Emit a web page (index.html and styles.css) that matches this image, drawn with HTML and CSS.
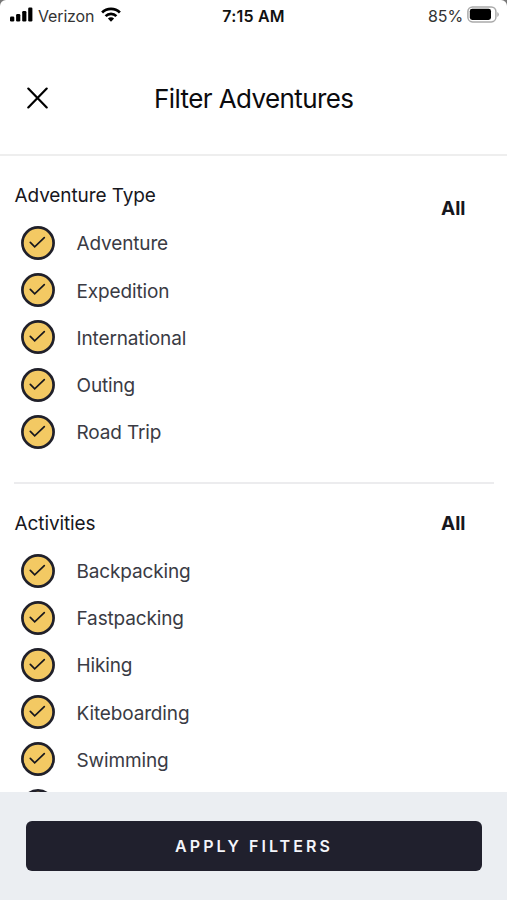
FILE: index.html
```html
<!DOCTYPE html>
<html lang="en">
<head>
<meta charset="utf-8">
<title>Filter Adventures</title>
<link rel="stylesheet" href="styles.css">
</head>
<body>
<svg width="0" height="0" class="defs" aria-hidden="true">
  <symbol id="check" viewBox="0 0 34 34">
    <circle cx="17" cy="17" r="15.6" fill="#f3c963" stroke="#20202a" stroke-width="2.7"/>
    <path d="M9.3 16.3l4.4 4.5 9.6-9.1" fill="none" stroke="#17171d" stroke-width="1.7" stroke-linecap="round"/>
  </symbol>
</svg>
<div class="screen">
  <div class="status">
    <div class="carrier">
      <svg class="signal" width="23" height="15" viewBox="0 0 23 15"><rect x="0" y="9.5" width="4.3" height="5" rx="1.3"/><rect x="6.1" y="7" width="4.2" height="7.5" rx="1.2"/><rect x="12.2" y="4" width="4.2" height="10.5" rx="1.2"/><rect x="18.2" y="0.5" width="4.2" height="14" rx="1.2"/></svg>
      <span class="network">Verizon</span>
      <svg width="20" height="15" viewBox="0 0 20 15" fill="none" stroke="#000" stroke-width="2.7"><path d="M1.1 5.5a12.6 12.6 0 0 1 17.8 0"/><path d="M4.6 9.1a7.6 7.6 0 0 1 10.8 0"/><path d="M10 14.7l-3.1-3.1a4.4 4.4 0 0 1 6.2 0z" fill="#000" stroke="none"/></svg>
    </div>
    <span class="clock">7:15 AM</span>
    <div class="power">
      <span class="percent">85%</span>
      <svg width="32" height="17" viewBox="0 0 32 17"><rect x=".9" y=".9" width="28" height="15" rx="4.6" fill="#fff" stroke="#aaa" stroke-width="1.5"/><rect x="2.8" y="2.8" width="21.2" height="11.2" rx="2.4"/><path d="M30.3 6v5q1.5-.8 1.5-2.5t-1.5-2.5z" fill="#aaa"/></svg>
    </div>
  </div>
  <header class="header">
    <svg class="close" width="22" height="22" viewBox="0 0 22 22"><path d="M1.3 1.6l18.4 18.8M19.7 1.6L1.3 20.4" stroke="#000" stroke-width="2.2" stroke-linecap="round"/></svg>
    <h1>Filter Adventures</h1>
  </header>
  <main class="filters">
    <section class="group">
      <div class="group-head first"><h2>Adventure Type</h2><span class="all">All</span></div>
      <ul>
        <li><svg><use href="#check"/></svg><span>Adventure</span></li>
        <li><svg><use href="#check"/></svg><span>Expedition</span></li>
        <li><svg><use href="#check"/></svg><span>International</span></li>
        <li><svg><use href="#check"/></svg><span>Outing</span></li>
        <li><svg><use href="#check"/></svg><span>Road Trip</span></li>
      </ul>
    </section>
    <section class="group">
      <div class="group-head"><h2>Activities</h2><span class="all">All</span></div>
      <ul>
        <li><svg><use href="#check"/></svg><span>Backpacking</span></li>
        <li><svg><use href="#check"/></svg><span>Fastpacking</span></li>
        <li><svg><use href="#check"/></svg><span>Hiking</span></li>
        <li><svg><use href="#check"/></svg><span>Kiteboarding</span></li>
        <li><svg><use href="#check"/></svg><span>Swimming</span></li>
        <li><svg><use href="#check"/></svg></li>
      </ul>
    </section>
  </main>
  <footer class="footer"><button>APPLY FILTERS</button></footer>
</div>
</body>
</html>
```
FILE: styles.css
```css
* { box-sizing: border-box; margin: 0; padding: 0; }
body { font-family: Inter, "Liberation Sans", sans-serif; background: #777; color: #17171d; }
.defs { position: absolute; }
.screen { height: 900px; display: flex; flex-direction: column; overflow: hidden; background: #fff; border-radius: 6px 6px 0 0; }
svg { display: block; flex: none; }

.status { height: 30px; display: grid; grid-template-columns: 1fr auto 1fr; align-items: center; padding: 0 8px 4px 10px; line-height: 26px; }
.carrier { display: flex; align-items: center; padding-bottom: 3px; }
.network { font-size: 16px; letter-spacing: -0.15px; color: #333; margin: 3px 7px 0 5px; }
.clock { font-size: 16px; font-weight: 600; letter-spacing: 0.2px; color: #111; padding: 0 2px 0 0; }
.power { display: flex; justify-content: flex-end; align-items: center; gap: 4px; padding-bottom: 3px; }
.percent { font-size: 16px; letter-spacing: -0.1px; color: #333; margin-top: 3px; }

.header { height: 126px; flex: none; border-bottom: 2px solid #eee; display: grid; grid-template-columns: 127px 1fr; align-items: center; padding: 12px 0 0 27px; }
.header h1 { font-size: 26px; font-weight: 400; letter-spacing: -0.6px; color: #0b0b0e; line-height: 32px; margin-top: 2px; }

.filters { flex: 1; min-height: 0; overflow: hidden; padding: 0 13px 0 14px; }
.group + .group { border-top: 2px solid #ececee; margin-top: 26.2px; }
.group-head { height: 63.4px; display: flex; justify-content: space-between; align-items: center; padding: 17px 28.5px 0 0.5px; }
.group-head.first { padding-top: 16px; }
.group-head.first .all { margin-top: 27px; }
h2 { font-size: 19px; font-weight: 400; letter-spacing: -0.1px; line-height: 24px; }
.all { font-size: 19px; font-weight: 700; line-height: 24px; }
ul { list-style: none; padding-left: 7px; }
li { height: 47.2px; display: flex; align-items: center; gap: 21.5px; font-size: 19px; letter-spacing: -0.14px; color: #3a3b44; line-height: 24px; }
li span { margin-top: 3px; }
li svg { width: 34px; height: 34px; }

.footer { height: 108px; flex: none; background: #ebeef2; padding: 29px 25px 0 26px; }
.footer button { display: block; width: 100%; height: 50px; border: 0; border-radius: 6px; background: #20202d; color: #f4f5fa; font: 600 16px/50px Inter, "Liberation Sans", sans-serif; letter-spacing: 3.05px; }
```
